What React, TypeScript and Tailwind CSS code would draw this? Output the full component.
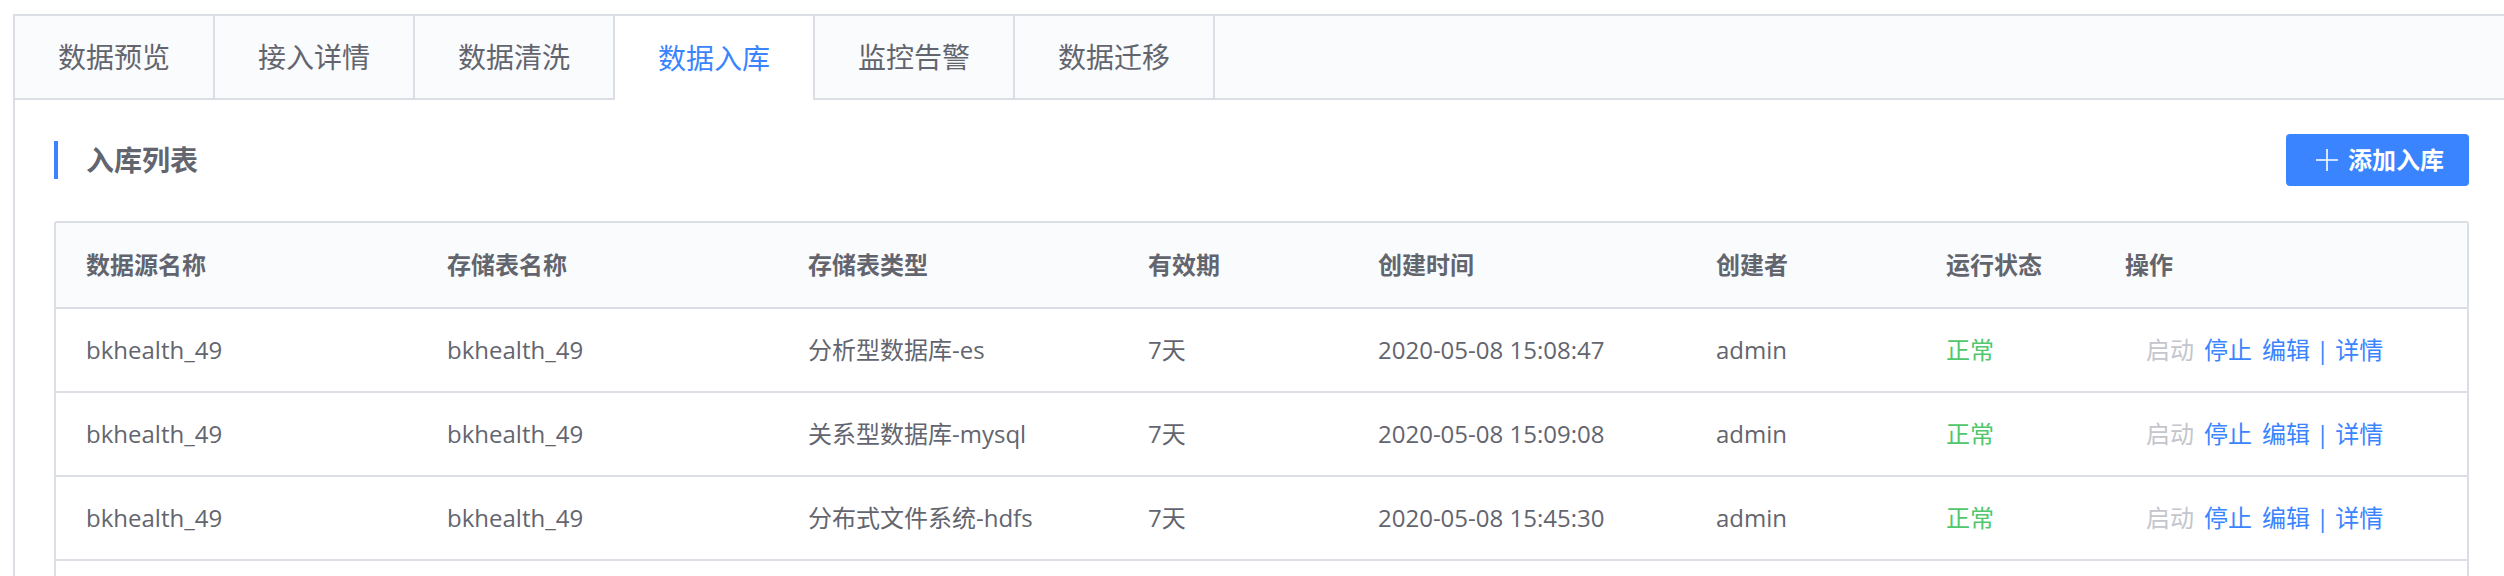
const tabs = ['数据预览', '接入详情', '数据清洗', '数据入库', '监控告警', '数据迁移']

interface StorageRow {
  source: string
  table: string
  type: string
  expires: string
  createdAt: string
  creator: string
  status: string
}

const rows: StorageRow[] = [
  { source: 'bkhealth_49', table: 'bkhealth_49', type: '分析型数据库-es', expires: '7天', createdAt: '2020-05-08 15:08:47', creator: 'admin', status: '正常' },
  { source: 'bkhealth_49', table: 'bkhealth_49', type: '关系型数据库-mysql', expires: '7天', createdAt: '2020-05-08 15:09:08', creator: 'admin', status: '正常' },
  { source: 'bkhealth_49', table: 'bkhealth_49', type: '分布式文件系统-hdfs', expires: '7天', createdAt: '2020-05-08 15:45:30', creator: 'admin', status: '正常' },
]

const headers = ['数据源名称', '存储表名称', '存储表类型', '有效期', '创建时间', '创建者', '运行状态', '操作']

const gridCols = 'grid grid-cols-[361px_361px_340px_230px_338px_230px_179px_1fr]'

export default function App() {
  const activeTab = 3

  return (
    <div className="h-[576px] overflow-hidden bg-white pl-[13px] pt-[14px] font-['Open_Sans','Noto_Sans_CJK_SC',sans-serif] text-[#63656e]">
      <div className="border-l-2 border-t-2 border-[#dcdee5] min-h-[600px]">
        {/* Tabs */}
        <div className="flex h-[84px]">
          {tabs.map((tab, index) => (
            <div
              key={tab}
              className={
                index === activeTab
                  ? 'flex w-[200px] items-center justify-center border-r-2 border-[#dcdee5] bg-white text-[28px] text-[#3a84ff]'
                  : 'flex w-[200px] items-center justify-center border-b-2 border-r-2 border-[#dcdee5] bg-[#fafbfd] text-[28px]'
              }
            >
              {tab}
            </div>
          ))}
          <div className="flex-1 border-b-2 border-[#dcdee5] bg-[#fafbfd]" />
        </div>

        <div className="pl-[39px] pr-[35px] pt-[34px]">
          {/* Title */}
          <div className="flex h-[52px] items-center justify-between">
            <div className="flex items-center">
              <div className="h-[38px] w-[4px] bg-[#3a84ff]" />
              <h3 className="ml-[28px] text-[28px] font-bold text-[#63656e]">入库列表</h3>
            </div>
            <button className="flex h-[52px] w-[183px] items-center rounded-[4px] bg-[#3a84ff] pl-[29px] text-[24px] font-bold text-white">
              <svg width="24" height="24" viewBox="0 0 24 24" className="mr-[9px]">
                <path d="M12 1v22M1 12h22" stroke="#fff" strokeWidth="1.6" fill="none" />
              </svg>
              添加入库
            </button>
          </div>

          {/* Table */}
          <div className="mt-[35px] rounded-[3px] border-2 border-[#dcdee5]">
            <div className={`${gridCols} h-[86px] items-center border-b-2 border-[#dcdee5] bg-[#fafbfd] text-[24px] font-bold`}>
              {headers.map(h => (
                <div key={h} className="pl-[30px]">{h}</div>
              ))}
            </div>
            {rows.map((row, index) => (
              <div key={index} className={`${gridCols} h-[84px] items-center border-b-2 border-[#dcdee5] text-[24px]`}>
                <div className="pl-[30px]">{row.source}</div>
                <div className="pl-[30px]">{row.table}</div>
                <div className="pl-[30px]">{row.type}</div>
                <div className="pl-[30px]">{row.expires}</div>
                <div className="pl-[30px]">{row.createdAt}</div>
                <div className="pl-[30px]">{row.creator}</div>
                <div className="pl-[30px] text-[#4fc76a]">{row.status}</div>
                <div className="flex items-center pl-[51px] text-[#3a84ff]">
                  <span className="text-[#c4c6cc]">启动</span>
                  <span className="ml-[10px]">停止</span>
                  <span className="ml-[10px]">编辑</span>
                  <span className="ml-[6px]">|</span>
                  <span className="ml-[6px]">详情</span>
                </div>
              </div>
            ))}
            {/* next row, below the fold */}
            <div className="h-[84px]" />
          </div>
        </div>
      </div>
    </div>
  )
}
